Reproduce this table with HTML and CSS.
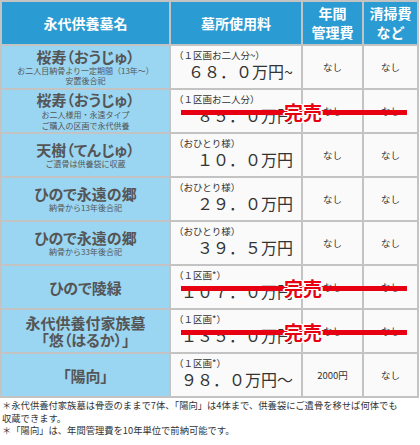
FILE: index.html
```html
<!DOCTYPE html>
<html lang="ja">
<head>
<meta charset="utf-8">
<link rel="stylesheet" href="styles.css">
</head>
<body>
<table class="plans">
  <colgroup>
    <col class="c-name"><col class="c-price"><col class="c-fee"><col class="c-clean">
  </colgroup>
  <thead>
    <tr>
      <th>永代供養墓名</th>
      <th>墓所使用料</th>
      <th class="two">年間<br>管理費</th>
      <th class="two">清掃費<br>など</th>
    </tr>
  </thead>
  <tbody>
    <tr>
      <td class="name"><span class="title">桜寿（おうじゅ）</span><span class="sub">お二人目納骨より一定期間（13年～）<br>安置後合祀</span></td>
      <td class="price"><span class="label">（１区画お二人分~）</span><span class="amount">６８．０万円~</span></td>
      <td class="small">なし</td>
      <td class="small">なし</td>
    </tr>
    <tr>
      <td class="name"><span class="title">桜寿（おうじゅ）</span><span class="sub loose">お二人様用・永遠タイプ<br>ご購入の区画で永代供養</span></td>
      <td class="price sold"><span class="label">（１区画お二人分）</span><span class="amount">８５．０万円</span><span class="bar"></span><span class="stamp">完売</span></td>
      <td class="small">なし</td>
      <td class="small">なし</td>
    </tr>
    <tr>
      <td class="name"><span class="title">天樹（てんじゅ）</span><span class="sub">ご遺骨は供養袋に収蔵</span></td>
      <td class="price"><span class="label">（おひとり様）</span><span class="amount">１０．０万円</span></td>
      <td class="small">なし</td>
      <td class="small">なし</td>
    </tr>
    <tr>
      <td class="name"><span class="title">ひので永遠の郷</span><span class="sub">納骨から13年後合祀</span></td>
      <td class="price"><span class="label">（おひとり様）</span><span class="amount">２９．０万円</span></td>
      <td class="small">なし</td>
      <td class="small">なし</td>
    </tr>
    <tr>
      <td class="name"><span class="title">ひので永遠の郷</span><span class="sub">納骨から33年後合祀</span></td>
      <td class="price"><span class="label">（おひとり様）</span><span class="amount">３９．５万円</span></td>
      <td class="small">なし</td>
      <td class="small">なし</td>
    </tr>
    <tr>
      <td class="name"><span class="title">ひので陵緑</span></td>
      <td class="price sold"><span class="label">（１区画*）</span><span class="amount">１０７．０万円</span><span class="bar"></span><span class="stamp">完売</span></td>
      <td class="small">なし</td>
      <td class="small">なし</td>
    </tr>
    <tr>
      <td class="name"><span class="title">永代供養付家族墓</span><span class="title">「悠（はるか）」</span></td>
      <td class="price sold"><span class="label">（１区画*）</span><span class="amount">１３５．０万円</span><span class="bar"></span><span class="stamp">完売</span></td>
      <td class="small">なし</td>
      <td class="small">なし</td>
    </tr>
    <tr>
      <td class="name"><span class="title">「陽向」</span></td>
      <td class="price"><span class="label">（１区画*）</span><span class="amount">９８．０万円～</span></td>
      <td class="small">2000円</td>
      <td class="small">なし</td>
    </tr>
  </tbody>
</table>
<div class="notes">
  <p>＊永代供養付家族墓は骨壺のままで7体、「陽向」は4体まで、供養袋にご遺骨を移せば何体でも<br>収蔵できます。</p>
  <p>＊「陽向」は、年間管理費を10年単位で前納可能です。</p>
</div>
</body>
</html>
```

FILE: styles.css
```css
html, body {
  margin: 0;
  padding: 0;
  background: #ffffff;
}

body {
  font-family: "Noto Sans CJK JP", "Noto Sans", sans-serif;
  color: #333333;
}

.plans {
  border-collapse: collapse;
  table-layout: fixed;
  width: 417px;
}

.c-name { width: 169px; }
.c-price { width: 132px; }
.c-fee { width: 61px; }
.c-clean { width: 55px; }

.plans th,
.plans td {
  border: 2px solid #c3c3c3;
  padding: 0;
}

.plans th {
  background: #2b9bd3;
  color: #ffffff;
  font-weight: bold;
  font-size: 14px;
  height: 42px;
  line-height: 19px;
  text-align: center;
  vertical-align: middle;
}

.plans td {
  height: 42px;
  background: #fafafa;
}

.plans td.name {
  background: #9ad5f2;
  color: #555555;
  text-align: center;
  vertical-align: middle;
}

.title {
  display: block;
  font-size: 15px;
  font-weight: bold;
  line-height: 17px;
  font-feature-settings: "palt";
}

.sub {
  display: block;
  font-size: 8px;
  line-height: 10px;
  margin-top: 1px;
}

.sub.loose {
  line-height: 11px;
}

.plans td.price {
  position: relative;
  vertical-align: top;
  color: #333333;
}

.label {
  display: block;
  font-size: 9.5px;
  line-height: 12px;
  padding: 3px 0 0 3px;
  color: #333333;
  white-space: nowrap;
}

.amount {
  display: block;
  font-size: 16px;
  line-height: 21px;
  text-align: right;
  padding-right: 8px;
  color: #333333;
  white-space: nowrap;
}

.plans td.small {
  font-size: 9.5px;
  text-align: center;
  vertical-align: middle;
  color: #333333;
}

.bar {
  position: absolute;
  left: 10px;
  top: 20px;
  width: 226px;
  height: 5px;
  background: #e60012;
  z-index: 1;
}

.stamp {
  position: absolute;
  left: 112px;
  top: 11px;
  font-size: 19px;
  line-height: 22px;
  font-weight: bold;
  color: #e60012;
  z-index: 2;
  padding: 0 1px;
  white-space: nowrap;
  text-shadow: 1px 0 0 #fff, -1px 0 0 #fff, 0 1px 0 #fff, 0 -1px 0 #fff,
    1px 1px 0 #fff, -1px -1px 0 #fff, 1px -1px 0 #fff, -1px 1px 0 #fff,
    2px 0 0 #fff, -2px 0 0 #fff;
}

.notes {
  padding: 1px 0 0 2px;
  font-size: 9.3px;
  line-height: 12.5px;
  color: #333333;
}

.notes p {
  margin: 0;
}
```
